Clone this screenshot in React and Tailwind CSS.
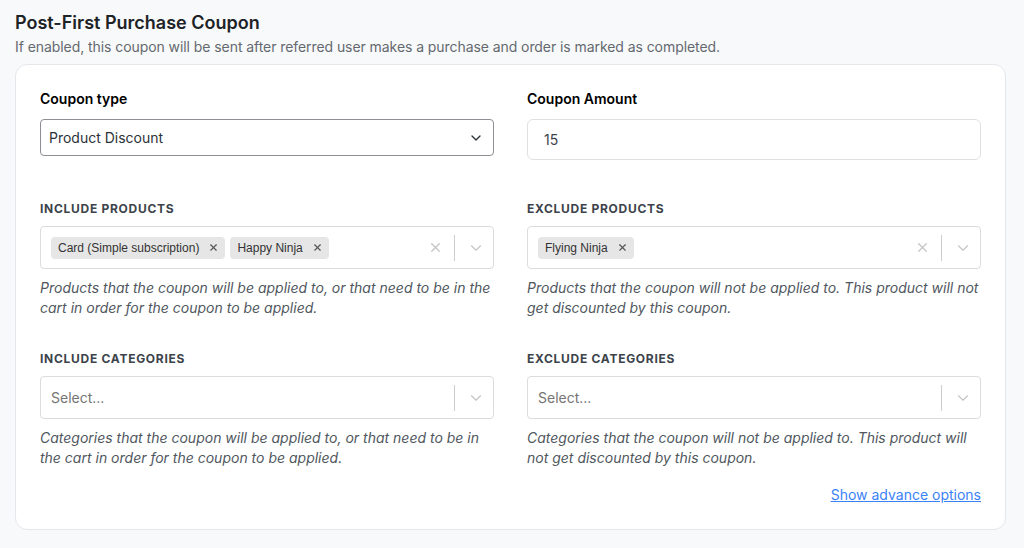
import { X, ChevronDown } from 'lucide-react';

function Tag({ label }) {
  return (
    <span className="flex items-center h-[22px] bg-[#e6e6e6] rounded-sm pl-[7px] pr-[6px] font-['Liberation_Sans',Arial,sans-serif] text-xs text-[#333]">
      {label}
      <X size={11} strokeWidth={2.5} className="ml-[9px] text-[#555]" />
    </span>
  );
}

function MultiSelect({ tags = [], placeholder = 'Select...' }) {
  return (
    <div className="flex items-center h-[43px] bg-white border border-[#dcdcde] rounded pl-[10px] pr-2">
      <div className="flex-1 flex items-center gap-[5px]">
        {tags.length === 0 ? (
          <span className="text-sm text-[#757575]">{placeholder}</span>
        ) : (
          tags.map((t) => <Tag key={t} label={t} />)
        )}
      </div>
      {tags.length > 0 && <X size={15} strokeWidth={2} className="text-[#c4c4c4] mr-[11px]" />}
      <span className="w-px h-[26px] bg-[#cccccc]" />
      <ChevronDown size={18} strokeWidth={1.5} className="text-[#c4c4c4] ml-3" />
    </div>
  );
}

function Field({ label, help, tags }) {
  return (
    <div>
      <p className="text-xs font-bold uppercase tracking-[0.06em] text-[#3c434a] leading-4 mb-[9px]">{label}</p>
      <MultiSelect tags={tags} />
      <p className="mt-[9px] text-sm italic text-[#50575e] leading-5">{help}</p>
    </div>
  );
}

export default function App() {
  return (
    <div className="min-h-screen bg-[#f8f9fa] px-[15px] pt-[11px] font-['Inter',sans-serif] text-[#1d2327]">
      <h2 className="text-lg font-semibold leading-6">Post-First Purchase Coupon</h2>
      <p className="text-sm text-[#646970] leading-5 mt-[2px] tracking-[-0.005em]">
        If enabled, this coupon will be sent after referred user makes a purchase and order is marked as completed.
      </p>

      <div className="mt-[7px] w-[991px] bg-white border border-[#e5e7eb] rounded-xl px-6 pt-6 pb-6">
        <div className="grid grid-cols-2 gap-x-[33px]">
          <div>
            <p className="text-sm font-semibold leading-5 text-black mb-[10px]">Coupon type</p>
            <div className="flex items-center justify-between h-[37px] border border-[#8c8f94] rounded pl-2 pr-[9px]">
              <span className="text-sm text-[#2c3338]">Product Discount</span>
              <ChevronDown size={16} strokeWidth={2} className="text-[#2c3338]" />
            </div>
          </div>
          <div>
            <p className="text-sm font-semibold leading-5 text-black mb-[10px]">Coupon Amount</p>
            <div className="flex items-center h-[41px] border border-[#e0e0e0] rounded-md pl-4">
              <span className="text-sm text-[#3c434a]">15</span>
            </div>
          </div>
        </div>

        <div className="grid grid-cols-2 gap-x-[33px] mt-[41px]">
          <Field
            label="Include Products"
            tags={['Card (Simple subscription)', 'Happy Ninja']}
            help="Products that the coupon will be applied to, or that need to be in the cart in order for the coupon to be applied."
          />
          <Field
            label="Exclude Products"
            tags={['Flying Ninja']}
            help="Products that the coupon will not be applied to. This product will not get discounted by this coupon."
          />
        </div>

        <div className="grid grid-cols-2 gap-x-[33px] mt-[33px]">
          <Field
            label="Include Categories"
            help="Categories that the coupon will be applied to, or that need to be in the cart in order for the coupon to be applied."
          />
          <Field
            label="Exclude Categories"
            help="Categories that the coupon will not be applied to. This product will not get discounted by this coupon."
          />
        </div>

        <div className="flex justify-end mt-[17px]">
          <a href="#" className="text-sm leading-5 text-[#3b82f6] underline">Show advance options</a>
        </div>
      </div>
    </div>
  );
}
